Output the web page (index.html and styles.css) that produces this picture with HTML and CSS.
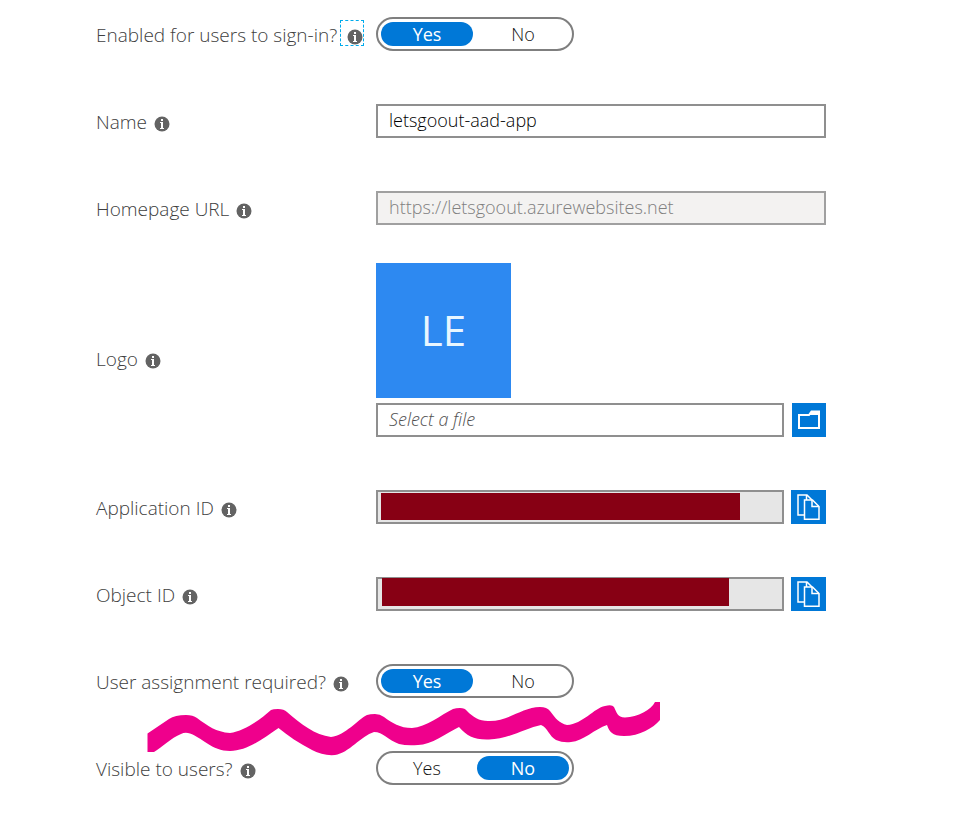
FILE: index.html
```html
<!DOCTYPE html>
<html lang="en">
<head>
<meta charset="utf-8">
<meta name="viewport" content="width=device-width, initial-scale=1">
<title>Application properties</title>
<link rel="stylesheet" href="styles.css">
</head>
<body>
<svg class="symbols" aria-hidden="true">
  <symbol id="info" viewBox="0 0 16 16">
    <circle cx="8" cy="8" r="7.5" fill="#636363"/>
    <path d="M7 3h2v2H7zM6 6h3v6h1v1H6v-1h1V7H6z" fill="#fff"/>
  </symbol>
  <symbol id="copy" viewBox="0 0 34 34">
    <path d="M13 25H7V5h9l5 5M15.500 5v5" fill="none" stroke="#fff" stroke-width="1.500"/>
    <path d="M13.500 10h8l6.500 6.500V29.200H13.500z" fill="#0078d7" stroke="#fff" stroke-width="1.500"/>
    <path d="M21 10v6.500h7" fill="none" stroke="#fff" stroke-width="1.500"/>
  </symbol>
</svg>
<form class="properties">
  <div class="row">
    <div class="caption"><span id="enabled">Enabled for users to sign-in?</span><button type="button" class="info focused" aria-label="About sign-in"><svg><use href="#info"/></svg></button></div>
    <div class="toggle" role="radiogroup" aria-labelledby="enabled">
      <label><input type="radio" name="enabled" checked><span>Yes</span></label>
      <label><input type="radio" name="enabled"><span>No</span></label>
    </div>
  </div>
  <div class="row">
    <div class="caption"><label for="name">Name</label><button type="button" class="info" aria-label="About name"><svg><use href="#info"/></svg></button></div>
    <input class="box" id="name" type="text" value="letsgoout-aad-app">
  </div>
  <div class="row">
    <div class="caption"><label for="home">Homepage URL</label><button type="button" class="info" aria-label="About homepage URL"><svg><use href="#info"/></svg></button></div>
    <input class="box" id="home" type="text" value="https://letsgoout.azurewebsites.net" disabled>
  </div>
  <div class="row logo-row">
    <div class="caption"><label for="logo">Logo</label><button type="button" class="info" aria-label="About logo"><svg><use href="#info"/></svg></button></div>
    <div class="logo-field">
      <div class="tile">LE</div>
      <div class="picker">
        <input class="box" id="logo" type="text" placeholder="Select a file" readonly>
        <button type="button" class="action" aria-label="Browse"><svg viewBox="0 0 34 34"><path d="M7 12h10l2.500-3.500H27V25H7z" fill="none" stroke="#fff" stroke-width="2"/><path d="M17 12l2.500-4H27v4z" fill="#fff"/></svg></button>
      </div>
    </div>
  </div>
  <div class="row">
    <div class="caption"><label for="app-id">Application ID</label><button type="button" class="info" aria-label="About application ID"><svg><use href="#info"/></svg></button></div>
    <div class="picker copyable">
      <div class="secret"><input class="box" id="app-id" type="text" readonly><span class="mask mask-app"></span></div>
      <button type="button" class="action" aria-label="Copy application ID"><svg><use href="#copy"/></svg></button>
    </div>
  </div>
  <div class="row">
    <div class="caption"><label for="object-id">Object ID</label><button type="button" class="info" aria-label="About object ID"><svg><use href="#info"/></svg></button></div>
    <div class="picker copyable">
      <div class="secret"><input class="box" id="object-id" type="text" readonly><span class="mask mask-object"></span></div>
      <button type="button" class="action" aria-label="Copy object ID"><svg><use href="#copy"/></svg></button>
    </div>
  </div>
  <div class="row marked">
    <div class="caption"><span id="assignment">User assignment required?</span><button type="button" class="info" aria-label="About user assignment"><svg><use href="#info"/></svg></button></div>
    <div class="toggle" role="radiogroup" aria-labelledby="assignment">
      <label><input type="radio" name="assignment" checked><span>Yes</span></label>
      <label><input type="radio" name="assignment"><span>No</span></label>
    </div>
    <svg class="scribble" viewBox="147 702 514 54" aria-hidden="true"><path fill="#ef008c" d="M147.500 733.500L169 719Q175 715 186 715Q193 715 197 718C208 726 216 732 230 733C244 731 260 720 271 710Q273 709 278 709Q284 709 287 712C301 724 315 735 331 737C346 735 357 720 367 715Q370 714 375 714Q380 714 384 717C392 723 400 728 412 728C426 727 441 715 453 709Q456 708 460 708Q465 708 467 711C473 717 479 721 488 721C508 722 522 707 540 707Q547 707 550 711C556 719 559 723 567 725C583 724 594 708 605 706Q612 704 614 707C617 713 617 717 625 717.500C638 717 651 710 655 702H660V720C653 728 640 736 624 736Q615 736 612 733Q609 731 607 725C595 729 583 741 571 742Q563 743 556 740C549 736 548 728 541 725C526 728 509 739 489 739.500C474 740 467 736 459 727C447 733 431 745 418 745Q407 746 399 744C388 740 383 732 374 732C361 736 349 753 335 755Q323 756 312 750C299 743 288 736 278.500 728C264 738 247 751 230 751C212 751 201 737 190 733.500Q185 732 181 734C171 738 162 747 154 752H147.500Z"/></svg>
  </div>
  <div class="row">
    <div class="caption"><span id="visible">Visible to users?</span><button type="button" class="info" aria-label="About visibility"><svg><use href="#info"/></svg></button></div>
    <div class="toggle" role="radiogroup" aria-labelledby="visible">
      <label><input type="radio" name="visible"><span>Yes</span></label>
      <label><input type="radio" name="visible" checked><span>No</span></label>
    </div>
  </div>
</form>
</body>
</html>
```
FILE: styles.css
```css
* { box-sizing: border-box; }
body {
  margin: 0;
  background: #fff;
  color: #404040;
  font-family: "Open Sans", "Noto Sans", sans-serif;
  font-size: 18px;
  font-weight: 300;
  line-height: 24px;
}
svg { display: block; }
button, input { font: inherit; }
.symbols { position: absolute; width: 0; height: 0; }
.properties {
  display: flex;
  flex-direction: column;
  gap: 53px;
  max-width: 826px;
  padding: 17px 0 40px 96px;
}
.row {
  display: grid;
  grid-template-columns: 280px minmax(0, 1fr);
  align-items: center;
}
.caption {
  display: flex;
  align-items: center;
  padding-top: 2px;
  font-size: 19px;
  white-space: nowrap;
}
.info {
  flex: none;
  border: 0;
  padding: 4px 0 0;
  margin-left: 7px;
  background: none;
}
.info svg { width: 16px; height: 16px; }
.focused {
  margin: -4px 0 0 4px;
  padding: 8px 0 0 6px;
  outline: 1px dashed #00abec;
}
.box {
  display: block;
  width: 100%;
  height: 34px;
  border: 2px solid #8f8f8f;
  border-radius: 0;
  padding: 0 11px 2px;
  background: #fff;
  color: #000;
}
.box:disabled { border-color: #a0a0a0; background: #f3f2f1; color: #808080; }
.box::placeholder { color: #505050; font-style: italic; opacity: 1; }
.toggle {
  display: flex;
  gap: 4px;
  width: 198px;
  height: 34px;
  padding: 3px;
  border: 2px solid #7f7f7f;
  border-radius: 17px;
  color: #111;
}
.toggle label { position: relative; flex: 1; }
.toggle input { position: absolute; inset: 0; margin: 0; opacity: 0; }
.toggle span { display: block; border-radius: 12px; text-align: center; }
.toggle input:checked + span { background: #0078d7; color: #fff; font-weight: 400; }
.logo-row { margin-top: -15px; }
.logo-row .caption { padding-top: 18px; }
.logo-field { display: grid; gap: 5px; }
.tile {
  display: grid;
  place-items: center;
  width: 135px;
  height: 135px;
  padding-bottom: 2px;
  background: #2d89f1;
  color: #e8f6ff;
  font-size: 42px;
  font-weight: 400;
}
.picker { display: flex; gap: 8px; }
.picker .box { flex: 1; min-width: 0; }
.action { flex: none; width: 34px; height: 34px; border: 0; padding: 0; background: #0078d7; }
.action svg { width: 34px; height: 34px; }
.copyable { gap: 7px; }
.copyable .action { width: 35px; }
.secret { position: relative; flex: 1; }
.secret .box { background: #e6e6e6; }
.mask { position: absolute; background: #870014; }
.mask-app { inset: 3px 44px 4px 5px; }
.mask-object { inset: 1px 55px 5px 6px; }
.marked { position: relative; }
.scribble {
  position: absolute;
  top: 38px;
  left: 51px;
  width: 514px;
  height: 54px;
  pointer-events: none;
}
```
